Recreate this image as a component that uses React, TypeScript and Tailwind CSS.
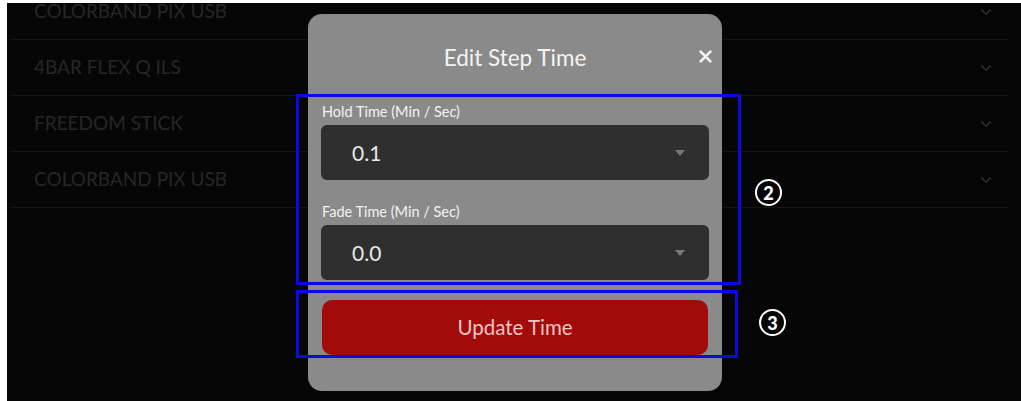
import { ChevronDown } from 'lucide-react';

const rows = ['COLORBAND PIX USB', '4BAR FLEX Q ILS', 'FREEDOM STICK', 'COLORBAND PIX USB'];

function Caret() {
  return (
    <svg width="10" height="6" viewBox="0 0 10 6" className="text-[#7a7a7a]">
      <path d="M0 0 L10 0 L5 6 Z" fill="currentColor" />
    </svg>
  );
}

function TimeSelect({ label, value }: { label: string; value: string }) {
  return (
    <div className="flex flex-col">
      <span className="text-[14.5px] leading-[14px] text-[#f2f2f2] px-[1px] mb-[6px]">{label}</span>
      <div className="h-[55px] rounded-[6px] bg-[#2f2f2f] flex items-center justify-between pl-[31px] pr-[24px]">
        <span className="text-[21px] text-[#e8e8e8]">{value}</span>
        <Caret />
      </div>
    </div>
  );
}

function Marker({ n }: { n: string }) {
  return (
    <div className="w-[27px] h-[27px] rounded-full border-[2.5px] border-white flex items-center justify-center text-white text-[18px] font-black leading-none">
      {n}
    </div>
  );
}

export default function App() {
  return (
    <div
      className="w-[1021px] h-[401px] bg-white overflow-hidden"
      style={{ fontFamily: 'Lato, "Open Sans", sans-serif' }}
    >
      <div className="relative ml-[7px] mt-[3px] h-[398px] bg-[#060606] overflow-hidden">
        {/* background list */}
        <div className="mt-[-19px] ml-[3px] mr-[12px]">
          {rows.map((name, i) => (
            <div
              key={i}
              className="h-[56px] flex items-center justify-between pl-[24px] pr-[14px] border-b border-[#161616]"
            >
              <span className="text-[19px] text-[#262626]">{name}</span>
              <ChevronDown className="w-[18px] h-[18px] text-[#303030]" strokeWidth={2} />
            </div>
          ))}
        </div>

        {/* modal */}
        <div className="absolute left-[301px] top-[11px] w-[414px] h-[377px] rounded-[14px] bg-[#8a8a8a] px-[13px] flex flex-col">
          <div className="h-[91px] flex items-center justify-center relative">
            <span className="text-[22.5px] text-[#f4f4f4] pb-[4px]">Edit Step Time</span>
            <svg
              width="13"
              height="13"
              viewBox="0 0 12 12"
              className="absolute right-[-3px] top-[36px]"
            >
              <path d="M1.5 1.5 L10.5 10.5 M10.5 1.5 L1.5 10.5" stroke="#f4f4f4" strokeWidth="2.4" strokeLinecap="round" />
            </svg>
          </div>
          <TimeSelect label="Hold Time (Min / Sec)" value="0.1" />
          <div className="h-[25px]" />
          <TimeSelect label="Fade Time (Min / Sec)" value="0.0" />
          <button className="mt-[20px] h-[55px] mx-[1px] rounded-[10px] bg-[#a30b0b] text-[#f3c4c4] text-[20.5px]">
            Update Time
          </button>
        </div>

        {/* annotation boxes */}
        <div className="absolute left-[289px] top-[91px] w-[445px] h-[191px] border-[3px] border-[#0a0ae6]" />
        <div className="absolute left-[289px] top-[287px] w-[442px] h-[68px] border-[3px] border-[#0a0ae6]" />
        <div className="absolute left-[748px] top-[176px]">
          <Marker n="2" />
        </div>
        <div className="absolute left-[752px] top-[306px]">
          <Marker n="3" />
        </div>
      </div>
    </div>
  );
}
